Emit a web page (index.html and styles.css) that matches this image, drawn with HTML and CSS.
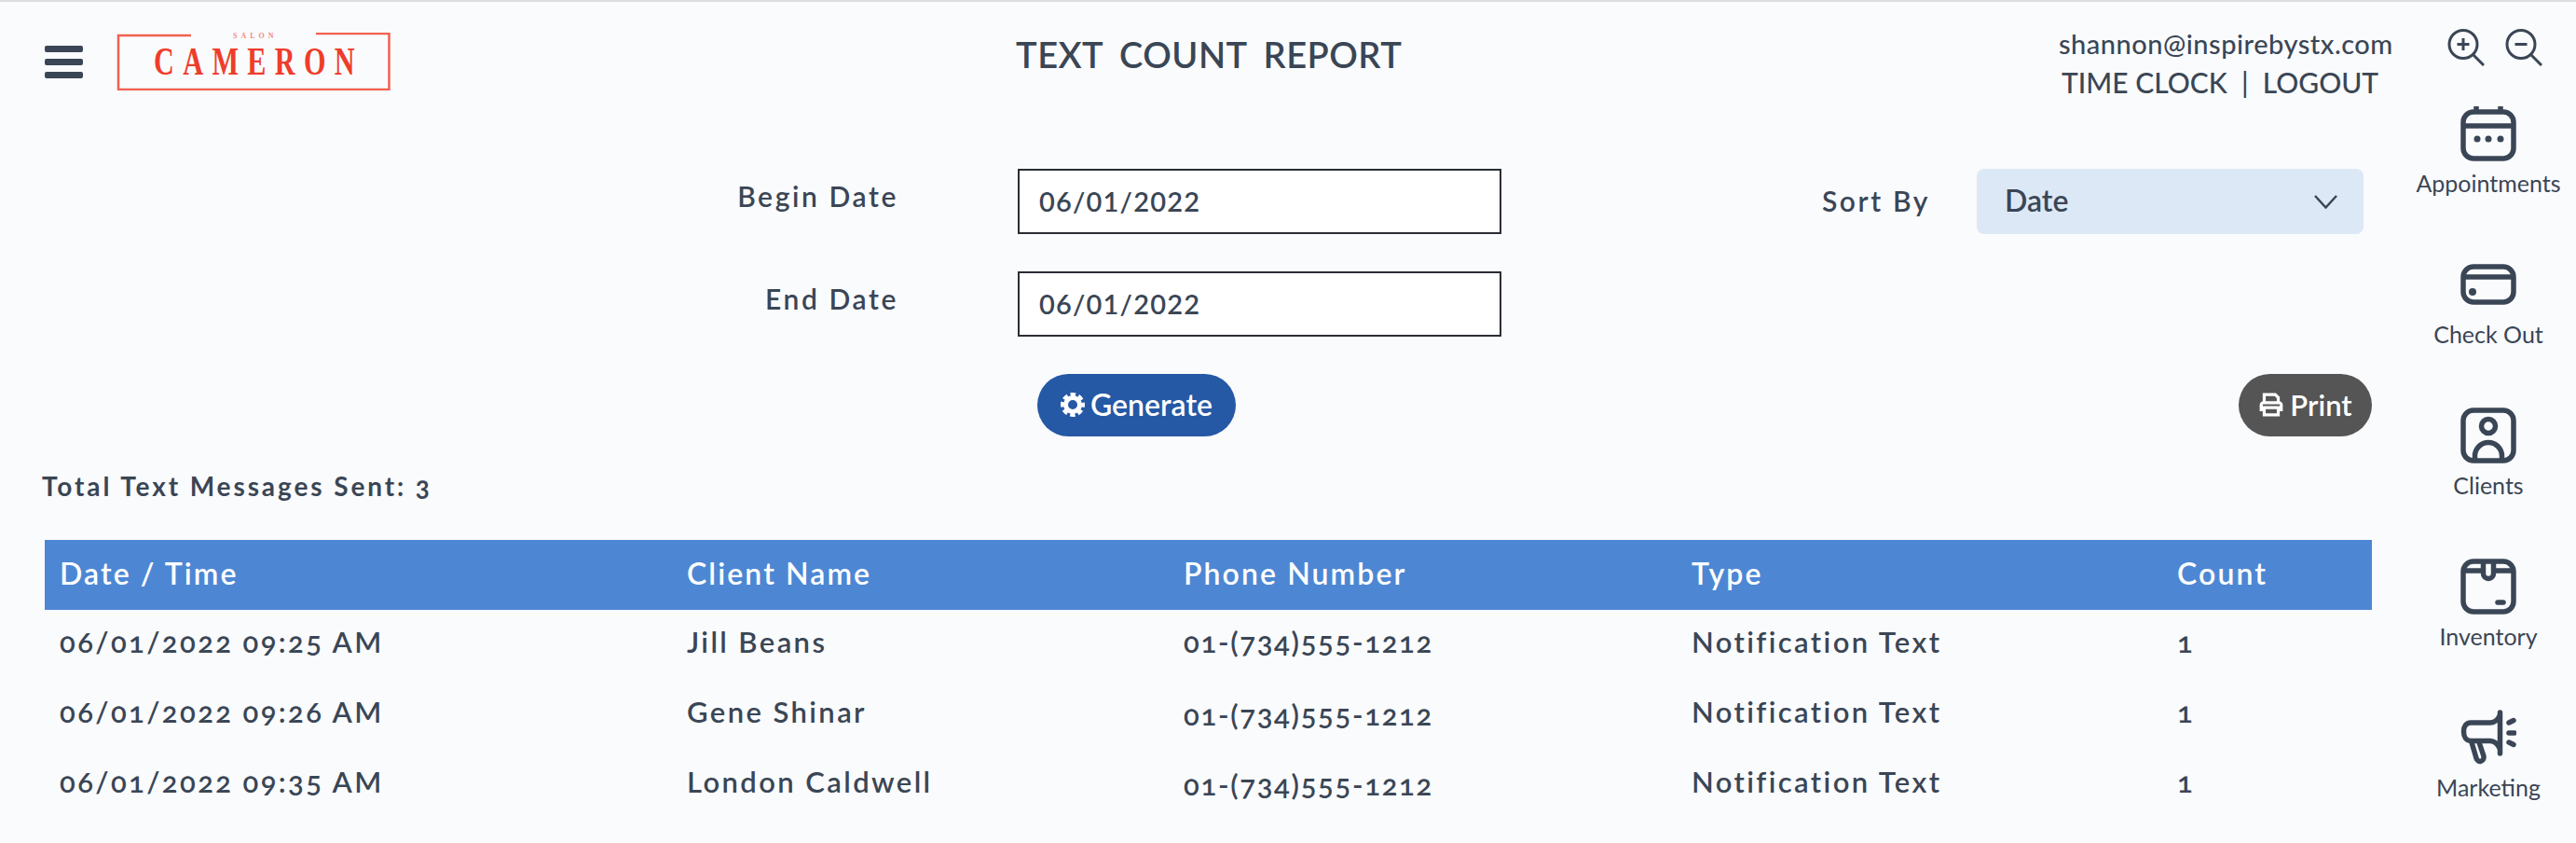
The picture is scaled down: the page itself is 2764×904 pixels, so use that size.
FILE: index.html
```html
<!DOCTYPE html>
<html lang="en">
<head>
  <meta charset="UTF-8" />
  <title>Text Count Report</title>
  <link rel="stylesheet" href="styles.css">
</head>
<body>
  <div class="page">
    <main class="main">
      <header class="topbar">
        <div class="brand">
          <div class="burger"><span></span><span></span><span></span></div>
          <svg class="logo" viewBox="0 0 295 62" width="295" height="62">
            <path class="logo-frame" d="M80 3H2V61H292.500V1H214" />
            <text class="logo-small" x="125" y="6">SALON</text>
            <text class="logo-big" transform="translate(40 45) scale(.72 1)">CAMERON</text>
          </svg>
        </div>
        <h1 class="title">TEXT COUNT REPORT</h1>
        <div class="account">
          <div class="email">shannon@inspirebystx.com</div>
          <div class="links">TIME CLOCK&nbsp; |&nbsp; LOGOUT</div>
        </div>
      </header>

      <section class="report">
        <form class="filters">
          <label class="lbl lbl-begin">Begin Date</label>
          <div class="date-box">06/01/2022</div>
          <label class="lbl lbl-sort">Sort By</label>
          <div class="select-box">
            <span>Date</span>
            <svg width="25" height="15" viewBox="0 0 25 15"><path d="M1 1L12.5 13.5L24 1" fill="none" stroke="#3a4655" stroke-width="2.5" /></svg>
          </div>

          <label class="lbl lbl-end">End Date</label>
          <div class="date-box date-end">06/01/2022</div>

          <button type="button" class="btn btn-generate">
            <svg width="26" height="26" viewBox="0 0 26 26">
              <circle cx="13" cy="13" r="7.5" fill="none" stroke="#fff" stroke-width="5" />
              <circle cx="13" cy="13" r="11" fill="none" stroke="#fff" stroke-width="4" stroke-dasharray="5.4 3.24" stroke-dashoffset="2.7" />
            </svg>
            Generate
          </button>
          <button type="button" class="btn btn-print">
            <svg width="28" height="26" viewBox="0 0 26 24">
              <path d="M6 10V2H17L20 5V10M6 17H3V12C3 11 4 10 5 10H21C22 10 23 11 23 12V17H20M6 15H20V22H6Z" fill="none" stroke="#fff" stroke-width="3" />
            </svg>
            Print
          </button>
        </form>

        <p class="total">Total Text Messages Sent: 3</p>

        <table class="grid">
          <colgroup>
            <col class="c1"><col class="c2"><col class="c3"><col class="c4"><col class="c5">
          </colgroup>
          <thead>
            <tr><th>Date / Time</th><th>Client Name</th><th>Phone Number</th><th>Type</th><th>Count</th></tr>
          </thead>
          <tbody>
            <tr><td>06/01/2022 09:25 AM</td><td>Jill Beans</td><td class="phone">01-(734)555-1212</td><td>Notification Text</td><td>1</td></tr>
            <tr><td>06/01/2022 09:26 AM</td><td>Gene Shinar</td><td class="phone low">01-(734)555-1212</td><td>Notification Text</td><td>1</td></tr>
            <tr><td>06/01/2022 09:35 AM</td><td>London Caldwell</td><td class="phone low">01-(734)555-1212</td><td>Notification Text</td><td>1</td></tr>
          </tbody>
        </table>
      </section>
    </main>

    <aside class="side">
      <div class="zoomers">
        <svg class="zoom-ico" viewBox="0 0 40 40"><circle cx="17" cy="16.5" r="15" /><path d="M27.5 27.5L39 39M17 10V23M10.5 16.5H23.5" /></svg>
        <svg class="zoom-ico" viewBox="0 0 40 40"><circle cx="17" cy="16.5" r="15" /><path d="M27.5 27.5L39 39M10.5 16.5H23.5" /></svg>
      </div>
      <nav>
        <a class="nav-item">
          <svg class="nav-ico" viewBox="0 0 60 60">
            <rect x="3" y="7" width="54" height="50" rx="11" />
            <path d="M3 22H57M17 1V6M43 1V6" />
            <circle class="dot" cx="18" cy="36" r="3.5" /><circle class="dot" cx="30" cy="36" r="3.5" /><circle class="dot" cx="43" cy="36" r="3.5" />
          </svg>
          <span>Appointments</span>
        </a>
        <a class="nav-item">
          <svg class="nav-ico" viewBox="0 0 60 60">
            <rect x="3" y="11" width="54" height="38" rx="11" />
            <path d="M3 22H57" />
            <circle class="dot" cx="13" cy="38" r="4" />
          </svg>
          <span>Check Out</span>
        </a>
        <a class="nav-item">
          <svg class="nav-ico" viewBox="0 0 60 60">
            <rect x="3" y="3" width="54" height="54" rx="11" />
            <circle cx="30" cy="20" r="7.5" />
            <path d="M15.5 57V52A14.5 14.5 0 0 1 44.5 52V57" />
          </svg>
          <span>Clients</span>
        </a>
        <a class="nav-item">
          <svg class="nav-ico" viewBox="0 0 60 60">
            <rect x="3" y="3" width="54" height="54" rx="11" />
            <path d="M3 13H24M36 13H57M24.5 3V16A5.5 5.5 0 0 0 35.5 16V3" />
            <path class="cap" d="M40 47H46" />
          </svg>
          <span>Inventory</span>
        </a>
        <a class="nav-item">
          <svg class="nav-ico" viewBox="0 0 60 60">
            <path class="cap" d="M42.5 3V47" />
            <path d="M42.5 6C40 11 37 14 32 14H11C6 14 3.5 18 3.5 23.5C3.5 29 6 33.5 11 33.5H32C37 33.5 40 37 42.5 42" />
            <path d="M12 35L17 52C18.500 57.500 26 56 25 50L20 35" />
            <path class="cap" d="M52 14L57 11.500M52 25H58M52 35L57 37.500" />
          </svg>
          <span>Marketing</span>
        </a>
      </nav>
    </aside>
  </div>
</body>
</html>
```

FILE: styles.css
```css
* {
  box-sizing: border-box;
}

body {
  margin: 0;
  background: #fafbfd;
  border-top: 2px solid #dcdee1;
  font-family: "Lato", "Open Sans", sans-serif;
  color: #3a4655;
  font-feature-settings: "onum";
}

.page {
  display: flex;
  width: 2764px;
}

.main {
  width: 2576px;
  padding-left: 48px;
  padding-right: 9px;
}

.topbar {
  display: grid;
  grid-template-columns: 1042px auto 1fr;
  height: 179px;
}

.brand {
  display: flex;
  align-items: center;
  gap: 36px;
  height: 62px;
  margin-top: 33px;
}

.burger {
  display: flex;
  flex-direction: column;
  gap: 7px;
  width: 41px;
}

.burger span {
  height: 7px;
  border-radius: 2px;
  background: #3a4655;
}

.logo-frame {
  fill: none;
  stroke: #f2614f;
  stroke-width: 2.5;
}

.logo-small {
  font-family: "Liberation Serif", serif;
  font-size: 8px;
  font-weight: bold;
  letter-spacing: 4px;
  fill: #f0402c;
  opacity: 0.6;
}

.logo-big {
  font-family: "Liberation Serif", serif;
  font-size: 42px;
  font-weight: bold;
  letter-spacing: 13px;
  fill: #ee3d2a;
}

.title {
  margin: 34px 0 0;
  font-size: 38px;
  font-weight: 600;
  line-height: 44px;
  word-spacing: 8px;
  letter-spacing: 0.5px;
}

.account {
  justify-self: end;
  width: 358px;
  margin-top: 28px;
}

.email {
  font-size: 29px;
  font-weight: 500;
  line-height: 34px;
  letter-spacing: 0.5px;
}

.links {
  margin-top: 5px;
  padding-left: 3px;
  font-size: 30px;
  font-weight: 500;
  line-height: 38px;
}

.report {
  width: 2497px;
}

.filters {
  display: grid;
  grid-template-columns: 1044px 519px 458px 476px;
  grid-auto-rows: 70px;
  row-gap: 40px;
}

.lbl {
  font-size: 30px;
  font-weight: 600;
  letter-spacing: 2.6px;
  text-align: right;
  line-height: 58px;
}

.lbl-begin, .lbl-end {
  grid-column: 1;
  margin-right: 128px;
}

.lbl-sort {
  margin-right: -2px;
  line-height: 68px;
}

.date-box {
  display: flex;
  align-items: center;
  padding: 0 0 2px 21px;
  background: #fff;
  border: 2px solid #2a2d34;
  font-size: 29px;
  font-weight: 600;
  letter-spacing: 1.2px;
  font-feature-settings: "lnum";
}

.date-end {
  grid-column: 2;
}

.select-box {
  display: flex;
  align-items: center;
  justify-content: space-between;
  width: 415px;
  margin-left: 52px;
  padding: 0 28px 0 30px;
  background: #dce8f6;
  border-radius: 8px;
  font-size: 32px;
  font-weight: 600;
}

.select-box span {
  margin-bottom: 3px;
}

.btn {
  display: flex;
  align-items: center;
  justify-content: center;
  gap: 6px;
  height: 67px;
  padding: 0 0 2px;
  border: none;
  border-radius: 34px;
  color: #fff;
  font-family: inherit;
  font-size: 32px;
  font-weight: 600;
}

.btn-generate {
  grid-column: 2;
  width: 213px;
  margin-left: 21px;
  background: #2558a5;
}

.btn-print {
  grid-column: 4;
  justify-self: end;
  width: 143px;
  background: #555555;
  font-size: 31px;
}

.total {
  margin: 34px 0 0 -3px;
  font-size: 28px;
  font-weight: 700;
  line-height: 32px;
  letter-spacing: 2.9px;
}

.grid {
  width: 2497px;
  margin-top: 42px;
  border-collapse: collapse;
  table-layout: fixed;
}

.c1 { width: 673px; }
.c2 { width: 533px; }
.c3 { width: 545px; }
.c4 { width: 521px; }
.c5 { width: 225px; }

.grid th {
  height: 75px;
  padding: 0 0 5px 16px;
  background: #4d87d4;
  color: #fff;
  font-size: 32px;
  font-weight: 600;
  letter-spacing: 2.1px;
  text-align: left;
}

.grid td {
  height: 75px;
  padding: 0 0 7px 16px;
  font-size: 31px;
  font-weight: 600;
  letter-spacing: 2.4px;
}

.grid td.phone {
  letter-spacing: 1.7px;
}

.grid td.low {
  padding-top: 6px;
}

.side {
  width: 188px;
  padding-top: 29px;
}

.zoomers {
  display: flex;
  justify-content: center;
  gap: 22px;
  padding-left: 14px;
  margin-bottom: 42px;
}

.zoom-ico {
  width: 40px;
  height: 40px;
  fill: none;
  stroke: #3a4655;
  stroke-width: 3;
}

.nav-item {
  display: flex;
  flex-direction: column;
  align-items: center;
  height: 162px;
  font-size: 25px;
  line-height: 30px;
}

.nav-item span {
  margin-top: 8px;
}

.nav-ico {
  width: 60px;
  height: 60px;
  fill: none;
  stroke: #3a4655;
  stroke-width: 5.5;
}

.nav-ico .dot {
  fill: #3a4655;
  stroke: none;
}

.nav-ico .cap {
  stroke-linecap: round;
}
```
